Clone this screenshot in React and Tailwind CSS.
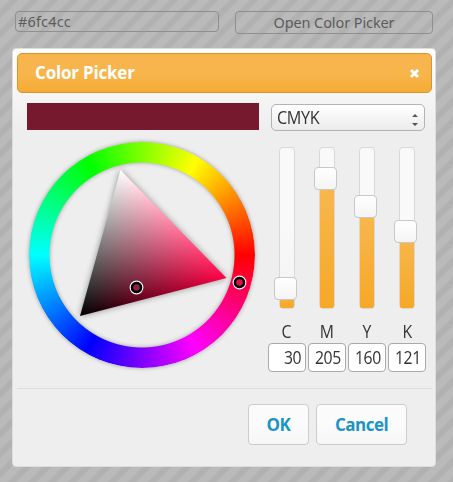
const sliders = [
  { label: "C", value: 30 },
  { label: "M", value: 205 },
  { label: "Y", value: 160 },
  { label: "K", value: 121 },
];
const tops = [129, 19, 47, 72];

function Dot({ className, fill }) {
  return (
    <svg className={`absolute size-[15px] ${className}`} viewBox="0 0 15 15">
      <circle cx="7.5" cy="7.5" r="6.3" fill={fill} stroke="#fff" strokeWidth="1.2" />
      <circle cx="7.5" cy="7.5" r="4.5" fill={fill} stroke="#000" strokeWidth="2.4" />
    </svg>
  );
}

function Wheel() {
  return (
    <div className="relative ml-[2px] mt-3 size-[226px]">
      <div className="size-full drop-shadow-[0_0_2px_rgba(0,0,0,0.35)]">
        <div className="size-full rounded-full bg-[conic-gradient(from_90deg,#f00,#f0f,#00f,#0ff,#0f0,#ff0,#f00)] [mask-image:radial-gradient(circle,transparent_92px,#000_93px)]" />
      </div>
      <svg className="absolute inset-0 drop-shadow-[0_0_3px_rgba(0,0,0,0.4)]" width="226" height="226" viewBox="0 0 226 226">
        <defs>
          <clipPath id="triangle">
            <path d="M91.5 28L197.5 136L51 174Z" />
          </clipPath>
          <linearGradient id="hue" gradientUnits="userSpaceOnUse" x1="71" y1="102" x2="197.5" y2="136">
            <stop offset="0" stopColor="#000" />
            <stop offset="1" stopColor="#ff0044" />
          </linearGradient>
          <linearGradient id="white" gradientUnits="userSpaceOnUse" x1="124" y1="155" x2="91.5" y2="28">
            <stop offset="0" stopColor="#000" />
            <stop offset="1" stopColor="#fff" />
          </linearGradient>
        </defs>
        <g clipPath="url(#triangle)">
          <rect width="226" height="226" fill="url(#hue)" />
          <rect width="226" height="226" fill="url(#white)" className="mix-blend-plus-lighter" />
        </g>
      </svg>
      <Dot className="left-[100px] top-[138px]" fill="#8a2444" />
      <Dot className="left-[203px] top-[133px]" fill="#e0103f" />
    </div>
  );
}

export default function App() {
  return (
    <div className="h-[482px] w-[453px] overflow-hidden bg-[repeating-linear-gradient(135deg,#bababa_0,#bababa_6px,#b1b1b1_8px,#b1b1b1_12.14px,#bababa_14.14px)] font-['Open_Sans',sans-serif] text-[#333]">
      <div className="flex h-12 items-start gap-4 pl-[15px] pt-[11px] text-[14.5px] text-[#5c5c5c] font-['Noto_Sans',sans-serif]">
        <div className="flex h-[21px] w-[204px] items-center rounded border border-[#8f8f8f] pl-[2px] tracking-[0.15px]">#6fc4cc</div>
        <div className="flex h-[23px] w-[198px] items-center justify-center rounded border border-[#8f8f8f] tracking-[-0.1px]">Open Color Picker</div>
      </div>
      <div className="ml-3 h-[419px] w-[424px] rounded-[4px] border border-[#ddd] bg-[linear-gradient(#fff_0,#eee_80px)] py-1 pl-1 pr-[3px]">
        <div className="flex h-10 items-center justify-between rounded-[5px] border border-[#dc9426] bg-[linear-gradient(#f8b54f_0,#f8b54c_50%,#f5ac34)] pl-[17px] pr-[11px] text-white">
          <span className="text-[17px] font-bold tracking-[-0.2px]">Color Picker</span>
          <svg width="11" height="11" viewBox="0 0 11 11"><path d="M2 2L9 9M9 2L2 9" stroke="#fff" strokeWidth="3" /></svg>
        </div>
        <div className="flex h-[296px] border-b border-[#ddd] pl-[10px] pt-[10px]">
          <div className="w-[232px]">
            <div className="h-[27px] bg-[#76192f]" />
            <Wheel />
          </div>
          <div className="ml-[9px]">
            <div className="ml-[3px] mt-[1px] flex h-[27px] w-[154px] items-center justify-between rounded-[5px] border border-[#b3b3b3] bg-linear-to-b from-white to-[#ececec] px-[5px]">
              <span className="inline-block origin-left scale-x-90 text-[18px] font-medium tracking-[-0.4px]">CMYK</span>
              <svg className="mt-1 mr-px" width="6" height="12" viewBox="0 0 6 12"><path d="M0 3L3 0L6 3ZM0 9L3 12L6 9Z" fill="#555" /></svg>
            </div>
            <div className="mt-4 flex gap-[2px]">
              {sliders.map((s, i) => (
                <div key={s.label} className="flex w-[38px] flex-col items-center">
                  <div className="relative h-[162px] w-4 rounded-[4px] border border-[#d8d8d8] bg-[linear-gradient(#f9f9f9_50%,#f2f2f2)]">
                    <div className="absolute inset-x-0 bottom-0 rounded-b-[2px] bg-[linear-gradient(#f8b850,#f6a828)]" style={{ top: tops[i] + 11 }} />
                    <div className="absolute -left-[6px] size-[23px] rounded-[4px] border border-[#c8c8c8] bg-[linear-gradient(#fff,#f4f4f4)]" style={{ top: tops[i] }} />
                  </div>
                  <span className="mb-px mt-[11px] h-[22px] origin-center scale-x-90 text-[17.5px] font-medium leading-[22px]">{s.label}</span>
                  <div className="flex h-[29px] w-[38px] items-center justify-end rounded-[4px] border border-[#aaa] bg-white pr-[4px] text-[17.5px] font-medium">
                    <span className="inline-block origin-right scale-x-90 tracking-[-0.4px]">{s.value}</span>
                  </div>
                </div>
              ))}
            </div>
          </div>
        </div>
        <div className="mt-[15px] flex gap-[7px] pl-[231px] text-[17px] font-bold tracking-[-0.5px] text-[#1c94c4]">
          <button className="h-[41px] w-[61px] rounded-[4px] border border-[#ccc] bg-[linear-gradient(#fbfbfb_50%,#f6f6f6)]">OK</button>
          <button className="h-[41px] w-[91px] rounded-[4px] border border-[#ccc] bg-[linear-gradient(#fbfbfb_50%,#f6f6f6)]">Cancel</button>
        </div>
      </div>
    </div>
  );
}
